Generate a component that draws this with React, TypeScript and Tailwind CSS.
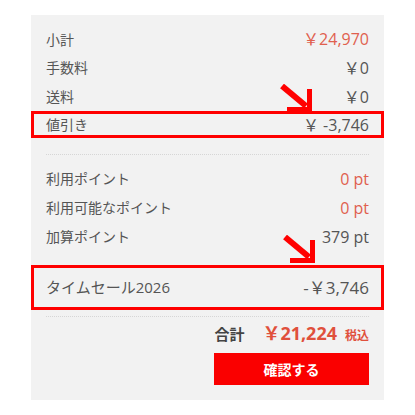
import React from "react";

const font = { fontFamily: '"Open Sans", "Noto Sans CJK JP", sans-serif' };

function Arrow({ className }: { className: string }) {
  return (
    <svg className={className} width="32" height="30" viewBox="0 0 32 30" fill="none">
      <line x1="2" y1="2" x2="26" y2="22" stroke="#ff0000" strokeWidth="6" />
      <polyline
        points="7,25.5 29.5,25.5 29.5,5"
        stroke="#ff0000"
        strokeWidth="5"
        strokeLinejoin="miter"
        fill="none"
      />
    </svg>
  );
}

function Row({ label, value, red, h }: { label: string; value: string; red?: boolean; h: string }) {
  return (
    <div className={`flex ${h} items-center justify-between`}>
      <span className="text-[14px] text-[#555]">{label}</span>
      <span className={`text-[16px] ${red ? "text-[#e0604e]" : "text-[#555]"}`}>{value}</span>
    </div>
  );
}

export default function App() {
  return (
    <div className="h-[415px] w-full bg-white pl-[31px] pt-[15px]" style={font}>
      <div className="flex h-[385px] w-[353px] flex-col bg-[#f2f2f2] pt-[10px]">
        {/* Amounts */}
        <div className="px-[15px]">
          <Row h="h-[28px]" label="小計" value="￥24,970" red />
          <Row h="h-[29px]" label="手数料" value="￥0" />
          <Row h="h-[29px]" label="送料" value="￥0" />
        </div>
        <div className="relative flex h-[27px] items-center justify-between border-[3px] border-[#ff0000] px-[12px]">
          <Arrow className="absolute bottom-full right-[69px]" />
          <span className="text-[14px] text-[#555]">値引き</span>
          <span className="text-[16px] text-[#555]">￥ -3,746</span>
        </div>

        <div className="mx-[15px] mt-[16px] border-t border-dotted border-[#d6d6d6]" />

        {/* Points */}
        <div className="mt-[9px] px-[15px]">
          <Row h="h-[29px]" label="利用ポイント" value="0 pt" red />
          <Row h="h-[29px]" label="利用可能なポイント" value="0 pt" red />
          <Row h="h-[29px]" label="加算ポイント" value="379 pt" />
        </div>

        <div className="relative mt-[14px] flex h-[45px] items-center justify-between border-[3px] border-[#ff0000] px-[12px]">
          <Arrow className="absolute bottom-[calc(100%+3px)] right-[66px]" />
          <span className="text-[15px] text-[#555]">タイムセール2026</span>
          <span className="text-[17px] text-[#555]">-￥3,746</span>
        </div>

        <div className="mx-[15px] mt-[6px] border-t border-dotted border-[#d6d6d6]" />

        {/* Total */}
        <div className="flex h-[30px] items-baseline justify-end px-[15px] pt-[3px]">
          <span className="text-[15px] font-bold text-[#444]">合計</span>
          <span className="ml-[18px] text-[18px] font-bold text-[#e0503c]">￥21,224</span>
          <span className="ml-[8px] text-[12px] font-bold text-[#e0503c]">税込</span>
        </div>
        <div className="mt-[6px] flex justify-end px-[15px]">
          <button className="h-[32px] w-[155px] bg-[#fa0000] text-[14px] font-bold text-white">
            確認する
          </button>
        </div>
      </div>
    </div>
  );
}
